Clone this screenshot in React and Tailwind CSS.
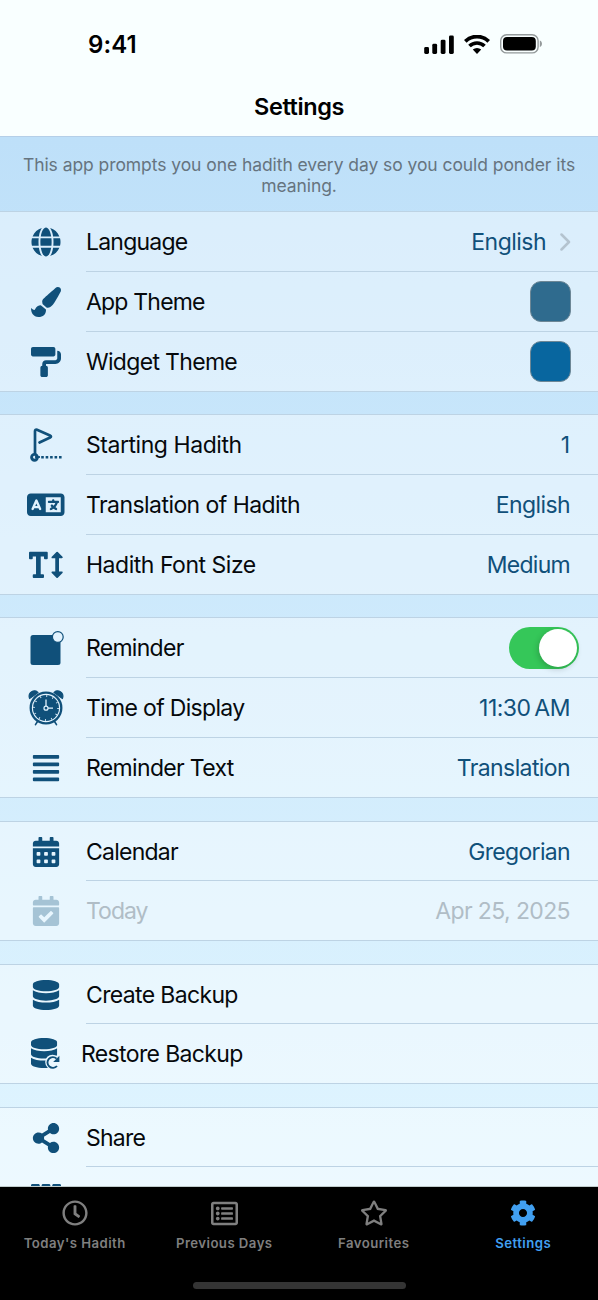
import React, { useState } from "react";
import {
  FaGlobe,
  FaPaintBrush,
  FaPaintRoller,
  FaTextHeight,
  FaAlignJustify,
  FaCalendarAlt,
  FaCalendarCheck,
  FaDatabase,
  FaShareAlt,
  FaTh,
  FaRegClock,
  FaRegListAlt,
  FaRegStar,
  FaCog,
} from "react-icons/fa";
import { FaLanguage } from "react-icons/fa6";

const StartFlagIcon = () => (
  <svg width="34" height="36" viewBox="0 0 34 36" fill="none">
    <path
      d="M6 27V4.2c0-1.300.8-1.900 2-1.400l13 5.600c1.300.6 1.300 1.500.1 2.100L10.500 15.500"
      stroke="currentColor"
      strokeWidth="2.700"
      strokeLinecap="round"
      strokeLinejoin="round"
    />
    <circle cx="5.500" cy="30.300" r="2.900" stroke="currentColor" strokeWidth="2.900" />
    <path d="M6 30h5" stroke="currentColor" strokeWidth="1.800" />
    <path
      d="M12.200 30.300h20.500"
      stroke="currentColor"
      strokeWidth="2.600"
      strokeDasharray="2.600 1.850"
    />
  </svg>
);

const ReminderIcon = () => (
  <svg width="36" height="36" viewBox="0 0 36 36">
    <rect x="2.500" y="5" width="30" height="30" rx="2.500" fill="currentColor" />
    <circle
      cx="29.800"
      cy="7"
      r="5.400"
      fill="#e3f3fe"
      stroke="currentColor"
      strokeWidth="1.200"
    />
  </svg>
);

const AlarmIcon = () => (
  <svg width="36" height="36" viewBox="0 0 36 36" fill="none">
    <path
      d="M1.600 8.500C-.2 4 3.500.1 8 1L10 2.500z M34.400 8.500C36.200 4 32.500.1 28 1L26 2.500z"
      fill="currentColor"
      stroke="currentColor"
      strokeWidth="1.200"
      strokeLinejoin="round"
    />
    <path
      d="M9.500 31.500l-2 3.200M26.500 31.500l2 3.200"
      stroke="currentColor"
      strokeWidth="1.600"
      strokeLinecap="round"
    />
    <circle cx="18" cy="18" r="15.300" stroke="currentColor" strokeWidth="2.300" />
    <circle cx="18" cy="18" r="13" fill="currentColor" />
    <circle
      cx="18"
      cy="18"
      r="12"
      stroke="#e3f3fe"
      strokeWidth="1.800"
      strokeDasharray="0.900 5.383"
    />
    <path d="M18 9.400v7M20 18.200h5" stroke="#e3f3fe" strokeWidth="1.300" />
    <circle cx="18" cy="18.200" r="2" stroke="#e3f3fe" strokeWidth="1.200" />
  </svg>
);

const RestoreIcon = () => (
  <svg width="29" height="31" viewBox="0 0 29 31" fill="none">
    <svg width="26.250" height="30" viewBox="0 0 448 512" fill="currentColor">
      <path d="M448 73v46c0 40-100 73-224 73S0 159 0 119V73C0 33 100 0 224 0s224 33 224 73zM448 176v102c0 40-100 73-224 73S0 318 0 278V176c48 33 136 48 224 48s176-15 224-48zM448 336v102c0 40-100 73-224 73S0 478 0 438V336c48 33 136 48 224 48s176-15 224-48z" />
    </svg>
    <circle cx="21.500" cy="24" r="7.300" fill="#eaf7fe" />
    <path
      d="M26 28A5.400 5.400 0 1 1 25.600 20.600"
      stroke="currentColor"
      strokeWidth="1.900"
    />
    <path d="M28.400 17.800v6.200h-6.200z" fill="currentColor" />
  </svg>
);

const SignalIcon = () => (
  <svg width="30" height="19" viewBox="0 0 30 19">
    <rect x="0.200" y="12" width="4.800" height="7" rx="1.400" />
    <rect x="8.300" y="8.800" width="4.800" height="10.200" rx="1.400" />
    <rect x="16.700" y="4.700" width="4.800" height="14.300" rx="1.400" />
    <rect x="25" y="0.500" width="4.800" height="18.500" rx="1.400" />
  </svg>
);

const WifiIcon = () => (
  <svg width="26" height="19" viewBox="0 0 26 19" fill="none">
    <path d="M1.300 6.300a16.800 16.800 0 0 1 23.400 0" stroke="#000" strokeWidth="3.800" />
    <path d="M5.500 11.100a10.600 10.600 0 0 1 15 0" stroke="#000" strokeWidth="3.600" />
    <path d="M13 19l-4.200-4.400a6 6 0 0 1 8.400 0z" fill="#000" />
  </svg>
);

const BatteryIcon = () => (
  <svg width="43" height="20" viewBox="0 0 43 20">
    <rect
      x="0.700"
      y="0.700"
      width="37.400"
      height="18.200"
      rx="6"
      fill="none"
      stroke="#949a9b"
      strokeWidth="1.400"
    />
    <rect x="3" y="3" width="32.800" height="13.600" rx="4" />
    <path d="M39.800 6.600c2.900.8 2.900 5.600 0 6.400z" fill="#949a9b" />
  </svg>
);

const groups = [
  {
    gap: "mb-[22px]",
    rows: [
      { icon: <FaGlobe size={30} />, label: "Language", track: "tracking-[-0.79px]", value: "English", valueTrack: "tracking-[-0.53px]", chevron: true },
      { icon: <FaPaintBrush size={30} />, label: "App Theme", track: "tracking-[-0.8px]", swatch: "bg-[#2f6b8e]" },
      { icon: <FaPaintRoller size={30} />, label: "Widget Theme", track: "tracking-[-0.68px]", swatch: "bg-[#08669f]" },
    ],
  },
  {
    gap: "mb-[22px]",
    rows: [
      { icon: <StartFlagIcon />, label: "Starting Hadith", track: "tracking-[-0.45px]", value: "1" },
      { icon: <FaLanguage size={37.5} />, label: "Translation of Hadith", track: "tracking-[-0.56px]", value: "English", valueTrack: "tracking-[-0.6px]" },
      { icon: <FaTextHeight size={33.75} />, label: "Hadith Font Size", track: "tracking-[-0.48px]", value: "Medium", valueTrack: "tracking-[-0.72px]" },
    ],
  },
  {
    gap: "mb-[23px]",
    rows: [
      { icon: <ReminderIcon />, label: "Reminder", track: "tracking-[-0.72px]", toggle: true },
      { icon: <AlarmIcon />, label: "Time of Display", track: "tracking-[-0.68px]", value: "11:30 AM", valueTrack: "tracking-[-0.5px] [word-spacing:-2.200px]" },
      { icon: <FaAlignJustify size={30} />, label: "Reminder Text", track: "tracking-[-0.66px]", value: "Translation", valueTrack: "tracking-[-0.6px]" },
    ],
  },
  {
    gap: "mb-[23px]",
    rows: [
      { icon: <FaCalendarAlt size={30} />, label: "Calendar", track: "tracking-[-0.75px]", value: "Gregorian", valueTrack: "tracking-[-0.68px]", height: "h-[59px]" },
      { icon: <FaCalendarCheck size={30} />, label: "Today", track: "tracking-[-0.98px]", value: "Apr 25, 2025", valueTrack: "tracking-[-0.61px]", disabled: true },
    ],
  },
  {
    gap: "mb-[23px]",
    rows: [
      { icon: <FaDatabase size={30} />, label: "Create Backup", track: "tracking-[-0.65px]", height: "h-[59px]" },
      { icon: <RestoreIcon />, label: "Restore Backup", track: "tracking-[-0.64px]", iconBox: "w-[90px] -mr-[9px]" },
    ],
  },
  {
    gap: "",
    rows: [
      { icon: <FaShareAlt size={30} />, label: "Share", track: "tracking-[-0.75px]", height: "h-[59px]" },
      { icon: <FaTh size={30} />, label: "", track: "" },
    ],
  },
];

const tabs = [
  { name: "Today's Hadith", icon: <FaRegClock size={26} /> },
  { name: "Previous Days", icon: <FaRegListAlt size={27} /> },
  { name: "Favourites", icon: <FaRegStar size={28} /> },
  { name: "Settings", icon: <FaCog size={26} /> },
];

const SettingRow = ({ row, last, checked, onToggle }) => {
  return (
    <div
      className={`flex ${row.height || "h-[60px]"} ${
        last ? "border-b border-[#bdd3e4]" : ""
      }`}
    >
      <div
        className={`flex shrink-0 items-center justify-center ${
          row.iconBox || "w-[92px] -mr-[6px]"
        } ${row.disabled ? "text-[#a5c3d5]" : "text-[#10507a]"}`}
      >
        {row.icon}
      </div>
      <div
        className={`flex grow items-center justify-between ${
          last ? "" : "border-b border-[#bdd3e4]"
        } ${row.toggle ? "pr-[19px]" : row.value && !row.chevron ? "pr-[28px]" : "pr-[27px]"}`}
      >
        <span
          className={`whitespace-nowrap pt-[2px] text-[23px] ${row.track} ${
            row.disabled ? "text-[#b0bdc6]" : "text-[#06090c]"
          }`}
        >
          {row.label}
        </span>
        {row.value && (
          <div className="flex items-center">
            <span
              className={`whitespace-nowrap pt-[2px] text-[23px] ${row.valueTrack || ""} ${
                row.disabled ? "text-[#b0bdc6]" : "text-[#10507a]"
              }`}
            >
              {row.value}
            </span>
            {row.chevron && (
              <svg className="ml-[14px]" width="11" height="18" viewBox="0 0 11 18" fill="none">
                <path
                  d="M1.500 1.500L9 9l-7.500 7.500"
                  stroke="#b4c3cf"
                  strokeWidth="2.500"
                  strokeLinecap="round"
                  strokeLinejoin="round"
                />
              </svg>
            )}
          </div>
        )}
        {row.swatch && (
          <div
            className={`h-[41px] w-[41px] rounded-[11px] border border-[#6d8796] ${row.swatch}`}
          ></div>
        )}
        {row.toggle && (
          <button
            className={`flex h-[42px] w-[70px] items-center rounded-full px-[2px] ${
              checked ? "justify-end bg-[#35c759]" : "justify-start bg-gray-300"
            }`}
            onClick={onToggle}
          >
            <span className="h-[38px] w-[38px] rounded-full bg-white shadow-[-1px_2px_6px_rgba(0,0,0,0.2)]"></span>
          </button>
        )}
      </div>
    </div>
  );
};

const App = () => {
  const [reminder, setReminder] = useState(true);
  const [activeTab, setActiveTab] = useState("Settings");

  return (
    <div className="flex h-[1300px] w-[598px] flex-col overflow-hidden bg-black font-['Inter','Liberation_Sans',sans-serif]">
      <header className="h-[137px] shrink-0 border-b border-[#b5cfe8] bg-[#f9ffff]">
        <div className="flex h-[88px] items-center justify-between pl-[88px] pr-[55px]">
          <span className="pt-[2px] text-[24px] font-semibold tracking-[0.1px]">
            9:41
          </span>
          <div className="flex items-center gap-[10px]">
            <SignalIcon />
            <WifiIcon />
            <BatteryIcon />
          </div>
        </div>
        <h1 className="text-center text-[23.500px] leading-[38px] font-semibold tracking-[-0.4px]">
          Settings
        </h1>
      </header>

      <main className="h-[1050px] shrink-0 overflow-hidden border-b border-[#c0cccc] bg-linear-to-b from-[#bee0f9] to-[#e0f5ff]">
        <p className="h-[74px] px-5 pt-[17px] text-center text-[17.500px] leading-[21px] tracking-[-0.07px] text-[#66747f]">
          This app prompts you one hadith every day so you could ponder its
          meaning.
        </p>
        {groups.map((group, i) => (
          <section
            key={i}
            className={`border-t border-[#bdd3e4] bg-white/42 ${group.gap}`}
          >
            {group.rows.map((row, j) => (
              <SettingRow
                key={j}
                row={row}
                last={j === group.rows.length - 1}
                checked={reminder}
                onToggle={() => setReminder(!reminder)}
              />
            ))}
          </section>
        ))}
      </main>

      <nav className="flex h-[113px] shrink-0 flex-col items-center bg-black">
        <div className="grid w-full grid-cols-4">
          {tabs.map((tab) => (
            <button
              key={tab.name}
              className={`flex flex-col items-center ${
                activeTab === tab.name ? "text-[#419ff0]" : "text-[#7f7f7f]"
              }`}
              onClick={() => setActiveTab(tab.name)}
            >
              <span className="flex h-[46px] items-center pt-[6px]">{tab.icon}</span>
              <span className="text-[13.200px] leading-[20px] font-semibold tracking-[0.45px]">
                {tab.name}
              </span>
            </button>
          ))}
        </div>
        <div className="mt-[29px] h-[7px] w-[213px] rounded-full bg-[#343434]"></div>
      </nav>
    </div>
  );
};

export default App;
